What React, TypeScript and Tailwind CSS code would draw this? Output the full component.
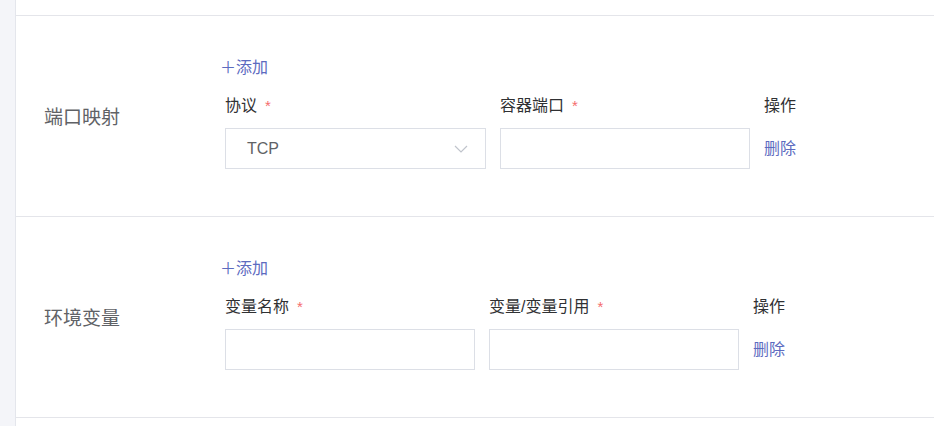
const font = { fontFamily: '"Liberation Sans", "Noto Sans CJK SC", sans-serif' };

function Chevron() {
  return (
    <svg width="14" height="8" viewBox="0 0 14 8" fill="none" className="shrink-0">
      <path d="M1 1l6 6 6-6" stroke="#c0c4cc" strokeWidth="1.2" />
    </svg>
  );
}

function FieldLabel({ text }: { text: string }) {
  return (
    <div className="flex h-[22px] items-center pt-[1px] text-[16px] leading-[22px] text-[#303133]">
      {text}
      <span className="ml-[8px] text-[15px] text-[#f56c6c]">*</span>
    </div>
  );
}

type Col = { label: string; width: string; select?: string };

function Section({ title, cols }: { title: string; cols: Col[] }) {
  return (
    <div className="flex h-[201px] border-b border-[#e4e5ea]">
      <div className="flex w-[204px] shrink-0 items-center pl-[28px] pt-[4px] text-[19px] text-[#606266]">
        {title}
      </div>
      <div className="flex flex-col pt-[41px]">
        <button className="h-[22px] w-fit text-left text-[16px] leading-[22px] text-[#5d6bbf]">
          ＋添加
        </button>
        <div className="mt-[15px] ml-[5px] flex gap-[14px]">
          {cols.map((c) => (
            <div key={c.label} className={`flex flex-col gap-[12px] ${c.width}`}>
              <FieldLabel text={c.label} />
              {c.select ? (
                <div className="flex h-[41px] items-center justify-between border border-[#dcdfe6] pl-[21px] pr-[17px] text-[16px] text-[#606266]">
                  <span>{c.select}</span>
                  <Chevron />
                </div>
              ) : (
                <div className="h-[41px] border border-[#dcdfe6]" />
              )}
            </div>
          ))}
          <div className="flex flex-col gap-[12px]">
            <div className="h-[22px] pt-[1px] text-[16px] leading-[22px] text-[#303133]">操作</div>
            <div className="flex h-[41px] items-center pt-[1px] text-[16px] text-[#5d6bbf]">删除</div>
          </div>
        </div>
      </div>
    </div>
  );
}

export default function App() {
  return (
    <div className="flex h-[426px] w-full overflow-hidden bg-white" style={font}>
      <div className="w-[16px] shrink-0 border-r border-[#e4e6ec] bg-[#f4f5f9]" />
      <div className="flex flex-1 flex-col">
        <div className="h-[16px] shrink-0 border-b border-[#e4e5ea]" />
        <Section
          title="端口映射"
          cols={[
            { label: "协议", width: "w-[261px]", select: "TCP" },
            { label: "容器端口", width: "w-[250px]" },
          ]}
        />
        <Section
          title="环境变量"
          cols={[
            { label: "变量名称", width: "w-[250px]" },
            { label: "变量/变量引用", width: "w-[250px]" },
          ]}
        />
      </div>
    </div>
  );
}
